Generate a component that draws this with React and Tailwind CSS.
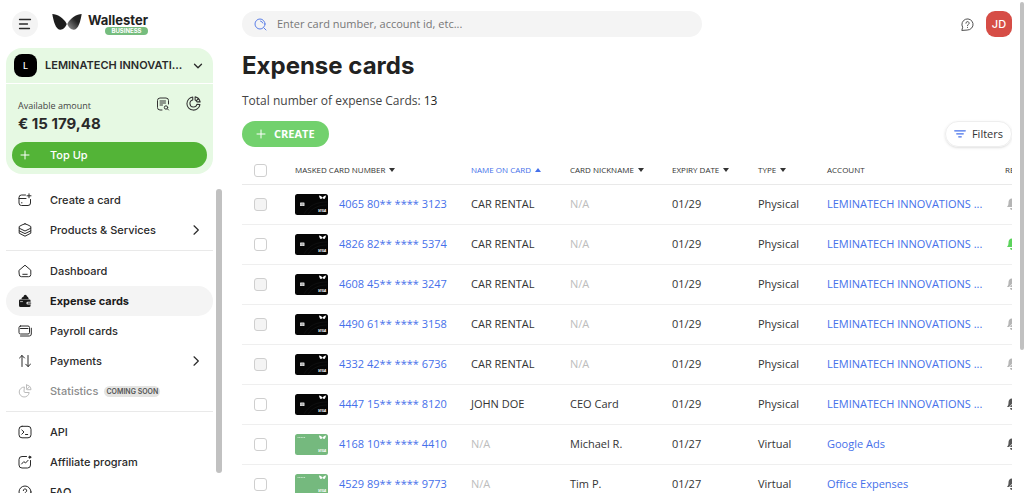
import { useState } from "react";
import clsx from "clsx";

const ACCOUNT = "LEMINATECH INNOVATIONS ...";

const columns = [
  { label: "Masked card number", width: "w-[176px]", sort: "desc" },
  { label: "Name on card", width: "w-[99px]", sort: "asc" },
  { label: "Card nickname", width: "w-[102px]", sort: "desc" },
  { label: "Expiry date", width: "w-[86px]", sort: "desc" },
  { label: "Type", width: "w-[69px]", sort: "desc" },
  { label: "Account", width: "w-[178px]" },
  { label: "Renewal", width: "w-[60px]" },
];

const cards = [
  { number: "4065 80** **** 3123", name: "CAR RENTAL", expiry: "01/29", type: "Physical", account: ACCOUNT, color: "black", disabled: true, bell: "text-[#b5b5b5]" },
  { number: "4826 82** **** 5374", name: "CAR RENTAL", expiry: "01/29", type: "Physical", account: ACCOUNT, color: "black", bell: "text-[#5bd35b]" },
  { number: "4608 45** **** 3247", name: "CAR RENTAL", expiry: "01/29", type: "Physical", account: ACCOUNT, color: "black", disabled: true, bell: "text-[#b5b5b5]", off: true },
  { number: "4490 61** **** 3158", name: "CAR RENTAL", expiry: "01/29", type: "Physical", account: ACCOUNT, color: "black", disabled: true, bell: "text-[#b5b5b5]", off: true },
  { number: "4332 42** **** 6736", name: "CAR RENTAL", expiry: "01/29", type: "Physical", account: ACCOUNT, color: "black", disabled: true, bell: "text-[#b5b5b5]", off: true },
  { number: "4447 15** **** 8120", name: "JOHN DOE", nickname: "CEO Card", expiry: "01/29", type: "Physical", account: ACCOUNT, color: "black", bell: "text-[#555]", off: true },
  { number: "4168 10** **** 4410", nickname: "Michael R.", expiry: "01/27", type: "Virtual", account: "Google Ads", color: "green", bell: "text-[#555]", off: true },
  { number: "4529 89** **** 9773", nickname: "Tim P.", expiry: "01/27", type: "Virtual", account: "Office Expenses", color: "green", bell: "text-[#555]", off: true },
];

function Icon({ className, children, viewBox = "0 0 14 14" }) {
  return (
    <svg
      viewBox={viewBox}
      fill="none"
      stroke="currentColor"
      strokeWidth="1"
      strokeLinecap="round"
      strokeLinejoin="round"
      aria-hidden="true"
      className={clsx("shrink-0", className)}
    >
      {children}
    </svg>
  );
}

const icons = {
  createCard: (
    <>
      <path d="M7.500 2H3.500A2.500 2.500 0 0 0 1 4.500V10a2.500 2.500 0 0 0 2.500 2.500H10a2.500 2.500 0 0 0 2.500-2.500V6.500M1 5.500h7M3.500 9.800h.5" />
      <path d="M11 .8v4M9 2.800h4" />
    </>
  ),
  layers: (
    <>
      <path d="M7 .8c2 .6 4 1.500 5.800 2.700v1.700L7 8 1.200 5.200V3.500C3 2.300 5 1.400 7 .8z" />
      <path d="M1.200 5.200v2.600L7 10.600l5.800-2.800V5.200M1.200 7.800v2.400L7 13.200l5.800-3V7.800" />
    </>
  ),
  home: <path d="M1.200 6.200L7 1.200l5.800 5v4.300a2.200 2.200 0 0 1-2.200 2.200H3.400a2.200 2.200 0 0 1-2.200-2.200zM4.800 10.300h4.400" />,
  wallet: (
    <>
      <path d="M3.500 5.200C3.500 3.500 4.500 3 5.500 2.800 5.700 1.500 6.500.8 7.300.8s1.500.7 1.700 1.800c1 .3 1.700 1.200 1.700 2.600z" fill="currentColor" stroke="none" />
      <path d="M1 6.800A1.300 1.300 0 0 1 2.300 5.500h9A1.300 1.300 0 0 1 12.600 6.800v1H9.800a1.300 1.300 0 0 0 0 2.800h2.800v1a1.500 1.500 0 0 1-1.500 1.500H2.500A1.500 1.500 0 0 1 1 11.600z" fill="currentColor" stroke="none" />
      <rect x="9.600" y="8.200" width="3.600" height="2" rx=".6" fill="#777" stroke="none" />
      <path d="M2.500 7.600h2" stroke="#f4f4f4" strokeWidth=".7" />
    </>
  ),
  cards: (
    <>
      <rect x="1" y="2" width="10.500" height="8" rx="1.500" />
      <path d="M2.500 12h8.800a2 2 0 0 0 2-2V4.200M2.500 4.500h7.500" />
    </>
  ),
  payments: <path d="M4 12.500v-11M1.500 4L4 1.500 6.500 4M10 1.500v11M7.700 10.200l2.300 2.300 2.500-2.300" />,
  pie: (
    <>
      <path d="M6 3a5 5 0 1 0 5.200 5.500H7A1 1 0 0 1 6 7.500z" />
      <path d="M8.500 1v3.700a1 1 0 0 0 1 1H13A4.600 4.600 0 0 0 8.500 1zM9 5.200l2.500-2.500" />
    </>
  ),
  api: (
    <>
      <rect x="1" y="1.300" width="12" height="11.500" rx="3" />
      <path d="M3.800 5L6 7 3.800 9.200M7.500 9.500h2.200" />
    </>
  ),
  affiliate: (
    <>
      <path d="M8.500 1.500H4a3 3 0 0 0-3 3V10a3 3 0 0 0 3 3h5.500a3 3 0 0 0 3-3V5.500" />
      <path d="M3.600 9l2.200-2.400L7.500 8l2.600-2.700" />
      <circle cx="11.800" cy="2.200" r="1" fill="currentColor" />
    </>
  ),
  question: (
    <>
      <circle cx="7" cy="7" r="6" />
      <path d="M5.300 5.600a1.700 1.700 0 1 1 2.500 1.500c-.6.300-.8.600-.8 1.200M7 10.200v.1" />
    </>
  ),
};

const navGroups = [
  [
    { label: "Create a card", icon: "createCard" },
    { label: "Products & Services", icon: "layers", expandable: true },
  ],
  [
    { label: "Dashboard", icon: "home" },
    { label: "Expense cards", icon: "wallet" },
    { label: "Payroll cards", icon: "cards" },
    { label: "Payments", icon: "payments", expandable: true },
    { label: "Statistics", icon: "pie", soon: true },
  ],
  [
    { label: "API", icon: "api" },
    { label: "Affiliate program", icon: "affiliate" },
    { label: "FAQ", icon: "question" },
  ],
];

function Butterfly({ className }) {
  return (
    <svg viewBox="0 0 30 18" className={className} aria-hidden="true">
      <defs>
        <linearGradient id="wing" x1="0" y1="1" x2="1" y2="0">
          <stop offset="0" stopColor="#999" />
          <stop offset=".6" stopColor="#222" />
        </linearGradient>
      </defs>
      <path d="M.3 1C5 1 12 5 14.700 11c-1.200 3.200-3.700 5.900-6.700 5.700C3.500 16.300 1.500 8 .3 1z" fill="#1d1d1d" />
      <path d="M29.700 1C25 1 18 5 15.300 11c1.200 3.200 3.700 5.900 6.700 5.700C26.500 16.300 28.500 8 29.700 1z" fill="url(#wing)" />
    </svg>
  );
}

function Logo() {
  return (
    <a href="#home" className="flex items-center gap-1.5">
      <Butterfly className="mb-1 h-[18px] w-[30px]" />
      <span className="flex flex-col items-end">
        <span className="text-[13px] leading-[14px] font-bold text-[#222]">Wallester</span>
        <span className="h-2 w-[43px] rounded-full bg-[#76bd7e] text-center text-[6px] leading-[8px] font-bold text-white">
          BUSINESS
        </span>
      </span>
    </a>
  );
}

function BalancePanel() {
  return (
    <section className="rounded-2xl bg-[#e6f9e3]">
      <button className="flex h-9 w-full items-center gap-2 border-b border-white pl-2 pr-2.5">
        <span className="flex size-[23px] shrink-0 items-center justify-center rounded-lg bg-black text-[9px] font-medium text-white">
          L
        </span>
        <span className="flex-1 whitespace-nowrap text-left text-[11px] font-semibold">LEMINATECH INNOVATI...</span>
        <Icon className="size-[10px]" viewBox="0 0 10 10">
          <path d="M1.500 3.200L5 6.800l3.500-3.600" strokeWidth="1.300" />
        </Icon>
      </button>
      <div className="px-1.5 pb-1.5 pt-3">
        <div className="flex items-end justify-between px-1.5">
          <div>
            <p className="pt-0.5 font-['Open_Sans',sans-serif] text-[9px] leading-4 text-[#444]">Available amount</p>
            <p className="text-[15px] leading-5 font-bold">€ 15 179,48</p>
          </div>
          <div className="flex gap-4 self-start text-[#333]">
            <button aria-label="Statement">
              <Icon className="size-[14px]">
                <path d="M6 13H4a2.500 2.500 0 0 1-2.500-2.500v-7A2.500 2.500 0 0 1 4 1h6a2.500 2.500 0 0 1 2.500 2.500V7M4 4h5.500M4 6h5.500M4 8h2.500M12.500 13l-1-1" />
                <circle cx="10" cy="10.500" r="1.700" />
              </Icon>
            </button>
            <button aria-label="Analytics">
              <Icon className="size-[15px]">
                <path d="M6.300 1A6.100 6.100 0 1 0 13 8l-2.800-.3A3.300 3.300 0 1 1 6.300 3.800z" />
                <path d="M8.500.8v3a3.300 3.300 0 0 1 1.700 1.700h3A6 6 0 0 0 8.500.8zM9.500 4.600l1.800-1.800" />
              </Icon>
            </button>
          </div>
        </div>
        <button className="mt-2 flex h-[26px] w-full items-center rounded-full bg-[#53b437] pl-2 text-[11px] font-medium text-white">
          <Icon className="mr-5 size-[10px]" viewBox="0 0 10 10">
            <path d="M5 1v8M1 5h8" />
          </Icon>
          Top Up
        </button>
      </div>
    </section>
  );
}

function NavItem({ item, active, onSelect }) {
  return (
    <a
      href={`#${item.icon}`}
      onClick={onSelect}
      aria-current={active ? "page" : undefined}
      className={clsx(
        "flex h-[30px] items-center rounded-full px-3 text-[11px]",
        active ? "bg-[#f4f4f4] font-bold text-[#1a1a1a]" : "font-medium",
        item.soon && "text-[#8c8c8c]"
      )}
    >
      <Icon className={clsx("mr-[18px] size-[14px]", item.soon && "text-[#bbb]")}>{icons[item.icon]}</Icon>
      {item.label}
      {item.soon && (
        <span className="ml-1.5 rounded-full bg-[#e4e4e2] px-0.5 text-[7px] leading-[11px] font-semibold text-[#555]">
          COMING SOON
        </span>
      )}
      {item.expandable && (
        <Icon className="ml-auto size-[10px]" viewBox="0 0 10 10">
          <path d="M3 .8L7.300 5 3 9.200" strokeWidth="1.200" />
        </Icon>
      )}
    </a>
  );
}

function Sidebar() {
  const [active, setActive] = useState("Expense cards");

  return (
    <aside className="flex w-[222px] shrink-0 flex-col pl-1.5">
      <div className="flex h-12 shrink-0 items-center gap-3.5 pl-1.5">
        <button aria-label="Menu" className="flex size-[26px] items-center justify-center rounded-full bg-[#f4f4f4]">
          <Icon className="size-[14px]">
            <path d="M1.500 2.500h11M1.500 7h8M1.500 11.500h10" strokeWidth="1.300" />
          </Icon>
        </button>
        <Logo />
      </div>
      <div className="mr-[9px]">
        <BalancePanel />
      </div>
      <div className="mt-[11px] flex min-h-0 flex-1 gap-[3px]">
        <nav className="min-w-0 flex-1 overflow-hidden">
          {navGroups.map((group, i) => (
            <div key={i} className={clsx(i > 0 && "mt-[5px] border-t border-[#e9e9e9] pt-[5px]")}>
              {group.map((item) => (
                <NavItem
                  key={item.label}
                  item={item}
                  active={active === item.label}
                  onSelect={() => setActive(item.label)}
                />
              ))}
            </div>
          ))}
        </nav>
        <div className="mb-5 mt-1 w-1.5 rounded-full bg-[#c1c1c1]" />
      </div>
    </aside>
  );
}

function CardThumb({ color }) {
  const black = color === "black";
  return (
    <svg viewBox="0 0 33 21" className="h-[21px] w-[33px] shrink-0" aria-hidden="true">
      <rect width="33" height="21" rx="2.500" fill={black ? "#050505" : "#75b97e"} />
      <path d="M24 1.500c1.500.3 3 1 3.500 2.300C28 2.500 29.500 1.800 31 1.500c-.3 1.500-.8 3.500-2 3.500-.7 0-1.200-.5-1.500-1.200-.3.700-.8 1.200-1.500 1.200-1.200 0-1.700-2-2-3.500z" fill="#fff" />
      {black ? (
        <>
          <rect x="5" y="8.500" width="4.500" height="3.500" rx=".5" fill="#ddd" />
          <path d="M5 10.200h4.500M7.200 8.500V12" stroke="#777" strokeWidth=".4" />
          <path d="M9 20C14 11 22 8 32 8M13 20c4-6 11-9 19-9" stroke="#222" strokeWidth=".4" fill="none" />
        </>
      ) : (
        <path d="M2.500 3.500h8" stroke="#d5ecd8" strokeWidth=".8" strokeDasharray="1.200 .4" />
      )}
      <text x="23" y="18" fontSize="4" fontWeight="700" fontStyle="italic" fill="#fff" fontFamily="Open Sans, sans-serif">
        VISA
      </text>
    </svg>
  );
}

function Bell({ off, className }) {
  return (
    <svg viewBox="0 0 12 12" className={clsx("size-3", className)} aria-hidden="true">
      <path d="M6 .5C3.500.5 2.500 2.500 2.500 4.500 2.500 7 2 7.500 1 9h10c-1-1.500-1.500-2-1.500-4.500 0-2-1-4-3.500-4zM4 10h4a2 2 0 0 1-4 0z" fill="currentColor" />
      {off && <path d="M1.500 11L10 2" stroke="#fff" strokeWidth=".8" />}
    </svg>
  );
}

function CheckBox({ label, disabled }) {
  return (
    <input
      type="checkbox"
      aria-label={label}
      disabled={disabled}
      className={clsx(
        "block size-[13px] appearance-none rounded-[3px] border border-[#cfcfcf] checked:bg-[#4570ea]",
        disabled ? "bg-[#f4f4f4]" : "bg-white"
      )}
    />
  );
}

function SortArrow({ dir }) {
  return (
    <svg viewBox="0 0 6 4" className="h-1 w-1.5" fill="currentColor" aria-hidden="true">
      <path d={dir === "asc" ? "M3 0l3 4H0z" : "M0 0h6L3 4z"} />
    </svg>
  );
}

function CardsTable() {
  const muted = <span className="text-[#bdbdbd]">N/A</span>;

  return (
    <div className="overflow-hidden">
      <table className="w-full min-w-[823px] table-fixed text-left text-[11px] text-[#333]">
        <thead>
          <tr className="h-[27px] border-b border-[#e9e9e9]">
            <th className="w-[53px] pl-3">
              <CheckBox label="Select all cards" />
            </th>
            {columns.map((col) => (
              <th key={col.label} className={clsx(col.width, "text-[8px] font-normal uppercase text-[#333]")}>
                {col.sort ? (
                  <button
                    className={clsx(
                      "flex items-center gap-1 whitespace-nowrap uppercase",
                      col.sort === "asc" && "text-[#4570ea]"
                    )}
                  >
                    {col.label}
                    <SortArrow dir={col.sort} />
                  </button>
                ) : (
                  col.label
                )}
              </th>
            ))}
          </tr>
        </thead>
        <tbody>
          {cards.map((card) => (
            <tr key={card.number} className="h-10 whitespace-nowrap border-b border-[#efefef]">
              <td className="pl-3">
                <CheckBox label={`Select card ${card.number}`} disabled={card.disabled} />
              </td>
              <td>
                <a href="#card" className="flex items-center gap-[11px] text-[#4570ea]">
                  <CardThumb color={card.color} />
                  {card.number}
                </a>
              </td>
              <td>{card.name || muted}</td>
              <td>{card.nickname || muted}</td>
              <td>{card.expiry}</td>
              <td>{card.type}</td>
              <td>
                <a href="#account" className="text-[#4570ea]">
                  {card.account}
                </a>
              </td>
              <td className="pl-px">
                <Bell off={card.off} className={card.bell} />
              </td>
            </tr>
          ))}
        </tbody>
      </table>
    </div>
  );
}

function App() {
  return (
    <div className="flex h-screen overflow-hidden bg-white font-['Inter',sans-serif] text-[#2a2a2a]">
      <Sidebar />
      <main className="flex min-w-0 flex-1 flex-col overflow-hidden pl-5 font-['Open_Sans',sans-serif]">
        <header className="flex h-12 shrink-0 items-center">
          <label className="flex h-[26px] w-[460px] items-center gap-2.5 rounded-full bg-[#f4f4f4] pl-3">
            <Icon className="size-[13px] text-[#5b7fe8]" viewBox="0 0 13 13">
              <circle cx="6" cy="6" r="5" />
              <path d="M9.700 9.700L12 12M6.500 3a3 3 0 0 1 2.300 2" />
            </Icon>
            <input
              type="search"
              aria-label="Search"
              placeholder="Enter card number, account id, etc..."
              className="min-w-0 flex-1 bg-transparent text-[11px] outline-none placeholder:text-[#777]"
            />
          </label>
          <div className="ml-auto flex items-center gap-3">
            <button aria-label="Help">
              <Icon className="size-[13px] text-[#444]">
                <path d="M1 13l.8-3A6 6 0 1 1 7 13z" />
                <path d="M5.300 5.600a1.700 1.700 0 1 1 2.500 1.500c-.6.300-.8.600-.8 1.200M7 10.200v.1" />
              </Icon>
            </button>
            <button className="size-[26px] rounded-[9px] bg-[#d64d46] font-['Inter',sans-serif] text-[11px] font-medium text-white">
              JD
            </button>
          </div>
        </header>
        <h1 className="shrink-0 font-['Inter',sans-serif] text-[24px] leading-9 font-bold text-[#222]">Expense cards</h1>
        <p className="mt-2 shrink-0 text-[12px] leading-[18px] text-[#444]">
          Total number of expense Cards: <span className="font-medium text-[#222]">13</span>
        </p>
        <div className="mt-[11px] flex shrink-0 items-center justify-between">
          <button className="flex h-[26px] items-center gap-2 rounded-full bg-[#72d16d] px-3.5 text-[11px] font-bold text-white">
            <Icon className="size-[10px]" viewBox="0 0 10 10">
              <path d="M5 1v8M1 5h8" />
            </Icon>
            CREATE
          </button>
          <button className="flex h-[26px] items-center gap-1.5 rounded-full border border-[#eee] px-2 text-[11px] text-[#333] shadow-sm">
            <Icon className="size-[12px] text-[#4570ea]" viewBox="0 0 12 12">
              <path d="M.7 2.800h10.600M2.700 5.800h6.600M4.700 8.800h2.600" strokeWidth="1.200" />
            </Icon>
            Filters
          </button>
        </div>
        <div className="mt-[10px]">
          <CardsTable />
        </div>
      </main>
      <div className="mb-[143px] ml-2 mt-0.5 w-1 shrink-0 rounded-full bg-[#c1c1c1]" />
    </div>
  );
}

export default App;
